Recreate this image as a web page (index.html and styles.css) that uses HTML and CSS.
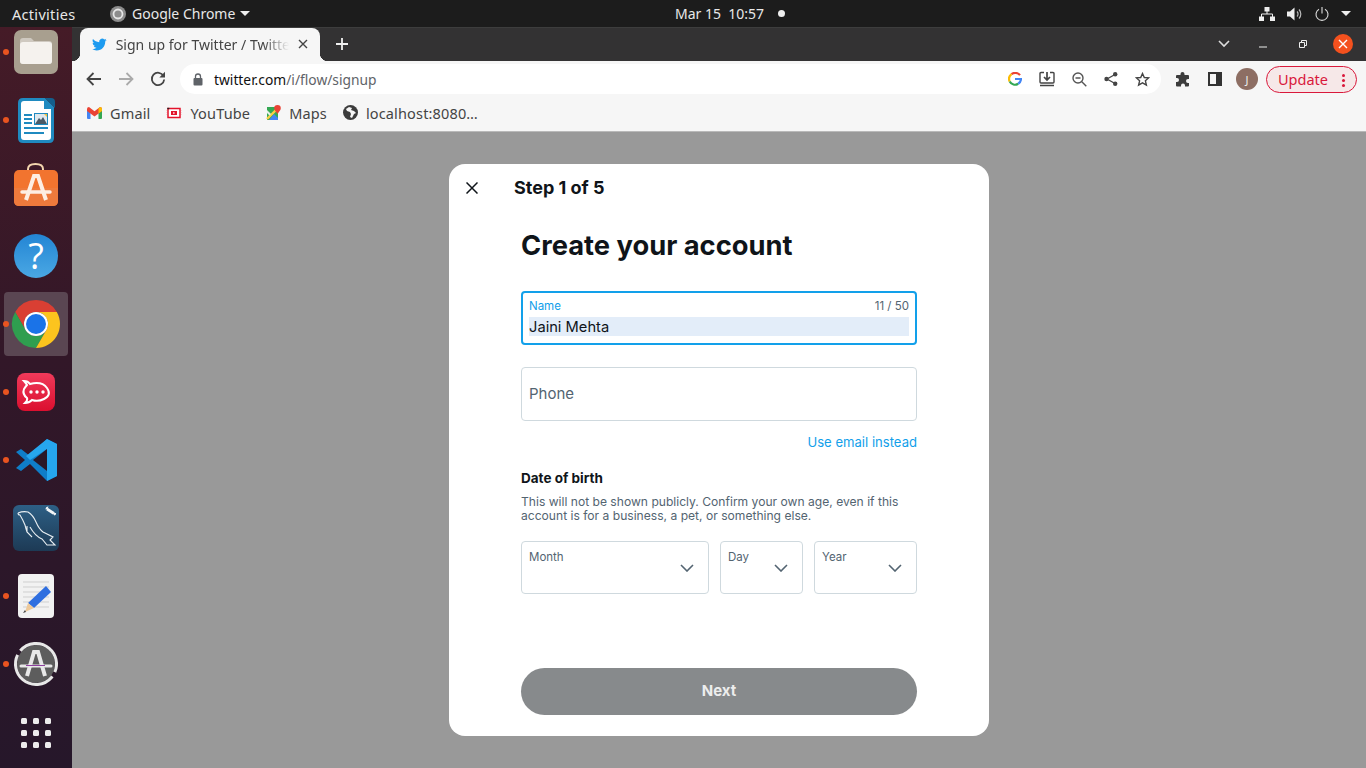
FILE: index.html
```html
<!DOCTYPE html>
<html lang="en">
<head>
  <meta charset="UTF-8">
  <title>Sign up for Twitter / Twitter</title>
  <link rel="stylesheet" href="styles.css">
</head>
<body>
  <header class="topbar">
    <span class="activities">Activities</span>
    <span class="app-menu">
      <svg class="app-icon" width="18" height="18" viewBox="0 0 18 18"><circle cx="9" cy="9" r="8" fill="#8c8c8c"/><circle cx="9" cy="9" r="4.5" fill="none" stroke="#e6e6e6" stroke-width="1.8"/></svg>
      Google Chrome
      <i class="caret"></i>
    </span>
    <span class="clock">Mar 15&nbsp;&nbsp;10:57</span>
    <i class="clock-dot"></i>
    <span class="tray">
      <svg width="16" height="14" viewBox="0 0 16 14"><path d="M5.5 0h5v4.5h-5zM0 9.500h5V14H0zM11 9.500h5V14h-5z" fill="#eee"/><path d="M8 4v3M2.500 10V7h11v3" fill="none" stroke="#eee"/></svg>
      <svg width="16" height="14" viewBox="0 0 16 14"><path d="M0 4.500h3L7.500.5v13L3 9.500H0z" fill="#eee"/><path d="M10 4.500a3.500 3.500 0 0 1 0 5M12 2.500a6.500 6.500 0 0 1 0 9" fill="none" stroke="#bbb" stroke-width="1.200"/></svg>
      <svg width="14" height="14" viewBox="0 0 14 14"><path d="M4 2.200a6 6 0 1 0 6 0M7 0v6.500" fill="none" stroke="#ddd" stroke-width="1.100"/></svg>
      <i class="caret"></i>
    </span>
  </header>

  <div class="desktop">
    <nav class="dock">
      <div class="dock-item running">
        <svg width="52" height="52" viewBox="0 0 52 52"><rect x="4" y="4" width="44" height="44" rx="7" fill="#a89f8f"/><path d="M10 15q0-3 3-3h8l3 3h15q3 0 3 3v17q0 3-3 3H13q-3 0-3-3z" fill="#cfc9c0"/><rect x="10" y="16" width="32" height="22" rx="3" fill="#f5f2ee"/></svg>
      </div>
      <div class="dock-item running">
        <svg width="52" height="52" viewBox="0 0 52 52"><path d="M8 9q0-5 5-5h22l9 9v31q0 5-5 5H13q-5 0-5-5z" fill="#1f8ac0"/><path d="M11 10q0-3 3-3h20v8h7v28q0 3-3 3H14q-3 0-3-3z" fill="#fff"/><path d="M35 4h6q4 0 4 4v6z" fill="#145f8c"/><path d="M14 20h8v2h-8zM14 24h8v2h-8zM14 28h8v2h-8zM14 33h24v2H14zM14 38h20v2H14z" fill="#1f8ac0"/><rect x="24" y="19" width="14" height="12" fill="#1f8ac0"/><rect x="25" y="20" width="12" height="10" fill="#dfe8ee"/><path d="M25 30l4-6 2 2 2-3 4 7z" fill="#4a5a66"/><path d="M34 20h3v3z" fill="#f0c23c"/></svg>
      </div>
      <div class="dock-item">
        <svg width="52" height="52" viewBox="0 0 52 52"><path d="M18 9V7q0-5 7.500-5T33 7v2" fill="none" stroke="#f3d6ae" stroke-width="2"/><rect x="4" y="8" width="44" height="36" rx="5" fill="#f2742f"/><path d="M4 26h44v13q0 5-5 5H9q-5 0-5-5z" fill="#ee7a3c"/><path d="M16 38l8-24h4l8 24" fill="none" stroke="#fdeee3" stroke-width="4"/><path d="M12 30h28" stroke="#fdeee3" stroke-width="3.500" stroke-linecap="round"/></svg>
      </div>
      <div class="dock-item">
        <svg width="52" height="52" viewBox="0 0 52 52"><defs><linearGradient id="helpBg" x1="0" y1="0" x2="0" y2="1"><stop offset="0" stop-color="#2385d4"/><stop offset="1" stop-color="#4aa8e4"/></linearGradient></defs><circle cx="26" cy="26" r="22" fill="url(#helpBg)"/><text x="26" y="39" class="help-mark">?</text></svg>
      </div>
      <div class="dock-item active running">
        <svg width="52" height="52" viewBox="-2 -2 52 52"><path d="M44.78 12H24A12 12 0 0 0 13.6 30L3.2 12A24 24 0 0 1 44.78 12z" fill="#d93f33"/><path d="M3.2 12L13.6 30A12 12 0 0 0 34.4 30L24 48A24 24 0 0 1 3.2 12z" fill="#2f9e4f"/><path d="M24 48L34.4 30A12 12 0 0 0 24 12H44.78A24 24 0 0 1 24 48z" fill="#fcc41e"/><circle cx="24" cy="24" r="12" fill="#fff"/><circle cx="24" cy="24" r="10" fill="#1a73e8"/></svg>
      </div>
      <div class="dock-item running">
        <svg width="52" height="52" viewBox="0 0 52 52"><defs><linearGradient id="rocketBg" x1="0" y1="0" x2="0" y2="1"><stop offset="0" stop-color="#f03a5a"/><stop offset="1" stop-color="#db0f2f"/></linearGradient></defs><rect x="7" y="7" width="38" height="38" rx="8" fill="url(#rocketBg)"/><path d="M14 15q4 0 6 3 12-3 17 4t-3 11q-6 3-12 1-3 3-7 3 3-3 2-5-5-4-3-9 2-3 3-4-1-2-3-4z" fill="none" stroke="#fff" stroke-width="2"/><circle cx="21" cy="26" r="1.700" fill="#fff"/><circle cx="27" cy="26" r="1.700" fill="#fff"/><circle cx="33" cy="26" r="1.700" fill="#fff"/></svg>
      </div>
      <div class="dock-item running">
        <svg width="52" height="52" viewBox="0 0 52 52"><path d="M37 5L47 10v32l-10 5-17-17-9 7-5-3 9-8-9-8 5-3 9 7z" fill="#0f7dc8"/><path d="M37 5l10 5v32l-10 5V15L20 26l-4-4z" fill="#26a6ee"/><path d="M37 15v22L23 26z" fill="#2a1727"/></svg>
      </div>
      <div class="dock-item">
        <svg width="52" height="52" viewBox="0 0 52 52"><defs><linearGradient id="sqlBg" x1="0" y1="0" x2="0" y2="1"><stop offset="0" stop-color="#2d5f85"/><stop offset="1" stop-color="#1d3a55"/></linearGradient></defs><rect x="3" y="3" width="46" height="46" rx="6" fill="url(#sqlBg)"/><path d="M8 11q5-2 10-1 5 3 8 10 3 7 7 10l10 5-3 3 5 5-8 0-5-6q-7-3-12-12M8 11q0 2 2 2 3 5 5 10 1 4 2 7l5 5M17 30v-6" fill="none" stroke="#e8eef2" stroke-width="1.100"/><path d="M37 7l7 4.500" fill="none" stroke="#f2f5f7" stroke-width="2.800"/><path d="M35.500 7.500q0-3 3-3l-1 2.500zM44 13.500q2.500 0 2-2.500l-2.500 0z" fill="#f2f5f7"/></svg>
      </div>
      <div class="dock-item running">
        <svg width="52" height="52" viewBox="0 0 52 52"><rect x="8" y="4" width="36" height="44" rx="4" fill="#f2f2f2"/><path d="M13 12h26M13 17h26M13 22h26M13 27h26M13 32h26M13 37h26" stroke="#cfcfcf"/><path d="M36 16l5 6-17 16-6-5z" fill="#2f6fe0"/><path d="M18 33l6 5-9 4z" fill="#eec99a"/><path d="M15 40l-2 3 3-1z" fill="#444"/></svg>
      </div>
      <div class="dock-item running">
        <svg width="52" height="52" viewBox="0 0 52 52"><circle cx="26" cy="26" r="19" fill="#5d5d5d"/><circle cx="26" cy="26" r="20.500" fill="none" stroke="#e8e8e8" stroke-width="3" stroke-dasharray="58 5 60 6" transform="rotate(-140 26 26)"/><path d="M17 38l7-24h4l7 24" fill="none" stroke="#e8e8e8" stroke-width="4"/><path d="M11 28h30" stroke="#e8e8e8" stroke-width="3" stroke-linecap="round"/><path d="M16 27.500h19" stroke="#8e3fa0"/></svg>
      </div>
      <div class="dock-item">
        <svg width="52" height="52" viewBox="0 -1 52 52"><g fill="#ececec"><rect x="11" y="11" width="6" height="6" rx="1.500"/><rect x="23" y="11" width="6" height="6" rx="1.500"/><rect x="35" y="11" width="6" height="6" rx="1.500"/><rect x="11" y="23" width="6" height="6" rx="1.500"/><rect x="23" y="23" width="6" height="6" rx="1.500"/><rect x="35" y="23" width="6" height="6" rx="1.500"/><rect x="11" y="35" width="6" height="6" rx="1.500"/><rect x="23" y="35" width="6" height="6" rx="1.500"/><rect x="35" y="35" width="6" height="6" rx="1.500"/></g></svg>
      </div>
    </nav>

    <div class="browser">
      <div class="tabstrip">
        <div class="tab">
          <svg width="15" height="15" viewBox="0 0 24 24"><path fill="#1d9bf0" d="M23.953 4.570a10 10 0 01-2.825.775 4.958 4.958 0 002.163-2.723c-.951.555-2.005.959-3.127 1.184a4.920 4.920 0 00-8.384 4.482C7.690 8.095 4.067 6.130 1.640 3.162a4.822 4.822 0 00-.666 2.475c0 1.710.870 3.213 2.188 4.096a4.904 4.904 0 01-2.228-.616v.060a4.923 4.923 0 003.946 4.827 4.996 4.996 0 01-2.212.085 4.936 4.936 0 004.604 3.417 9.867 9.867 0 01-6.102 2.105c-.390 0-.779-.023-1.170-.067a13.995 13.995 0 007.557 2.209c9.053 0 13.998-7.496 13.998-13.985 0-.210 0-.420-.015-.630A9.935 9.935 0 0024 4.590z"/></svg>
          <span class="tab-title">Sign up for Twitter / Twitter</span>
          <svg class="tab-close" width="10" height="10" viewBox="0 0 10 10"><path d="M1 1l8 8M9 1l-8 8" stroke="#444" stroke-width="1.400"/></svg>
        </div>
        <svg class="new-tab" width="12" height="12" viewBox="0 0 12 12"><path d="M6 0v12M0 6h12" stroke="#f0f0f0" stroke-width="1.800"/></svg>
        <div class="window-controls">
          <svg width="12" height="8" viewBox="0 0 12 8"><path d="M1 1l5 5 5-5" fill="none" stroke="#ddd" stroke-width="1.600"/></svg>
          <svg class="win-min" width="8" height="8" viewBox="0 0 8 8"><path d="M0 7h8" stroke="#eee"/></svg>
          <svg class="win-max" width="8" height="8" viewBox="0 0 8 8"><path d="M.5 2.500h5v5h-5zM2.500 2V.5h5v5H6" fill="none" stroke="#eee"/></svg>
          <span class="win-close"><svg width="10" height="10" viewBox="0 0 10 10"><path d="M1 1l8 8M9 1l-8 8" stroke="#fff" stroke-width="1.400"/></svg></span>
        </div>
      </div>

      <div class="toolbar">
        <svg class="nav-btn" width="16" height="14" viewBox="0 0 16 14"><path d="M15 7H2M7.500 1L1.500 7l6 6" fill="none" stroke="#444" stroke-width="1.800"/></svg>
        <svg class="nav-btn" width="16" height="14" viewBox="0 0 16 14"><path d="M1 7h13M8.500 1l6 6-6 6" fill="none" stroke="#aaa" stroke-width="1.800"/></svg>
        <svg class="nav-btn" width="16" height="16" viewBox="0 0 16 16"><path d="M13.500 5a6.200 6.200 0 1 0 .7 3.500" fill="none" stroke="#444" stroke-width="1.800"/><path d="M15 0.800v5.700H9.300z" fill="#444"/></svg>
        <div class="omnibox">
          <svg width="10" height="13" viewBox="0 0 10 13"><path d="M2.500 6V3.500a2.500 2.500 0 0 1 5 0V6" fill="none" stroke="#5f6368" stroke-width="1.300"/><rect x="0.500" y="5" width="9" height="7.500" rx="1" fill="#5f6368"/></svg>
          <span class="url"><b>twitter.com</b>/i/flow/signup</span>
          <span class="omni-actions">
            <svg width="14" height="14" viewBox="0 0 14 14"><path d="M12 3.200A6 6 0 0 0 3.500 2.200" fill="none" stroke="#ea4335" stroke-width="2.200"/><path d="M3.500 2.200A6 6 0 0 0 1.700 9.500" fill="none" stroke="#fbbc05" stroke-width="2.200"/><path d="M1.700 9.500a6 6 0 0 0 8.500 2.300" fill="none" stroke="#34a853" stroke-width="2.200"/><path d="M10.200 11.800A6 6 0 0 0 13 7H7" fill="none" stroke="#4285f4" stroke-width="2.200"/></svg>
            <svg width="16" height="16" viewBox="0 0 16 16"><path d="M5 1.500H2q-1 0-1 1V11q0 1 1 1h12q1 0 1-1V2.500q0-1-1-1h-3M1 14.500h14" fill="none" stroke="#444" stroke-width="1.400"/><path d="M8 1v7M5 6l3 3 3-3" fill="none" stroke="#444" stroke-width="1.700"/></svg>
            <svg width="15" height="15" viewBox="0 0 15 15"><circle cx="6" cy="6" r="5" fill="none" stroke="#555" stroke-width="1.400"/><path d="M3.500 6h5M9.800 9.800l4.500 4.500" fill="none" stroke="#555" stroke-width="1.400"/></svg>
            <svg width="14" height="14" viewBox="0 0 14 14"><path d="M11 2.500L3 7l8 4.500" fill="none" stroke="#444" stroke-width="1.300"/><circle cx="11.200" cy="2.300" r="2.200" fill="#444"/><circle cx="2.500" cy="7" r="2.200" fill="#444"/><circle cx="11.200" cy="11.700" r="2.200" fill="#444"/></svg>
            <svg width="15" height="15" viewBox="0 0 15 15"><path d="M7.500 1.500l1.800 4 4.300.4-3.200 2.900 1 4.300-3.900-2.300-3.900 2.300 1-4.300L1.400 5.900l4.300-.4z" fill="none" stroke="#444" stroke-width="1.400"/></svg>
          </span>
        </div>
        <svg class="tool-btn" width="15" height="15" viewBox="0 0 15 15"><path d="M5.500 2a2 2 0 0 1 4 0v1H13q1 0 1 1v3h-1a2 2 0 0 0 0 4h1v2.500q0 1-1 1H10v-1a2 2 0 0 0-4 0v1H2q-1 0-1-1V10h1a2 2 0 0 0 0-4H1V4q0-1 1-1h3.500z" fill="#3c3c3c"/></svg>
        <svg class="tool-btn" width="14" height="14" viewBox="0 0 14 14"><rect x="1" y="1" width="12" height="12" fill="none" stroke="#333" stroke-width="2"/><rect x="8" y="1" width="5" height="12" fill="#333"/></svg>
        <span class="avatar">J</span>
        <span class="update">Update<i class="update-dots"></i></span>
      </div>

      <div class="bookmarks">
        <span class="bookmark">
          <svg width="15" height="12" viewBox="0 0 15 12"><path d="M0 2h3.500v10H1q-1 0-1-1z" fill="#4285f4"/><path d="M11.500 2H15v9q0 1-1 1h-2.500z" fill="#34a853"/><path d="M0 2q0-2 2-2l5.500 4.200L13 0q2 0 2 2v2L7.500 9.500 0 4z" fill="#ea4335"/><path d="M13 0q2 0 2 2v2l-3.500 2.500V1.500z" fill="#fbbc05"/></svg>
          Gmail
        </span>
        <span class="bookmark">
          <svg width="16" height="12" viewBox="0 0 16 12"><path d="M0 3v6M16 3v6" stroke="#f3b8b8" stroke-dasharray="1 1"/><rect x="2" y="1.500" width="12" height="9" fill="#fff" stroke="#e3132b" stroke-width="1.500"/><rect x="5" y="4" width="6" height="4" fill="#e3132b"/><path d="M7.300 4.800l1.800 1.200-1.800 1.200z" fill="#fff"/><path d="M1.300 .8h2v1.400h-2z" fill="#222"/></svg>
          YouTube
        </span>
        <span class="bookmark">
          <svg width="15" height="15" viewBox="0 0 15 15"><path d="M1 2h11v13H1z" fill="#34a853"/><path d="M3 15l5-6 4 4v2z" fill="#4285f4"/><path d="M1 14L11 4" stroke="#fbd045" stroke-width="2.400"/><path d="M1 5l4 4-1.500 1.500L1 8z" fill="#e8f1e8"/><path d="M11.500 0a3.300 3.300 0 0 1 3.300 3.300c0 2-2 3.500-3.300 5.700-1.300-2.200-3.300-3.700-3.300-5.700A3.300 3.300 0 0 1 11.500 0z" fill="#ea4335"/></svg>
          Maps
        </span>
        <span class="bookmark">
          <svg width="15" height="15" viewBox="0 0 15 15"><circle cx="7.500" cy="7.500" r="7.500" fill="#3c3c3c"/><path d="M6 2L3 4l1 2 3 1 1 2-1 3 2 1 2-4 2-1-2-2-3-1 1-2z" fill="#f6f6f6"/></svg>
          localhost:8080…
        </span>
      </div>

      <main class="page">
        <section class="modal">
          <div class="modal-head">
            <svg width="12" height="12" viewBox="0 0 12 12"><path d="M.5.500l11 11M11.500.500l-11 11" stroke="#0f1419" stroke-width="1.500"/></svg>
            <span class="step">Step 1 of 5</span>
          </div>
          <div class="modal-body">
            <h1 class="title">Create your account</h1>

            <div class="field field-focus">
              <div class="field-top"><span>Name</span><span class="count">11 / 50</span></div>
              <div class="field-value"><span>Jaini Mehta</span></div>
            </div>

            <div class="field field-empty">Phone</div>
            <a class="switch-link">Use email instead</a>

            <h2 class="dob-title">Date of birth</h2>
            <p class="dob-note">This will not be shown publicly. Confirm your own age, even if this account is for a business, a pet, or something else.</p>

            <div class="dob-row">
              <div class="select select-month"><span>Month</span><svg width="14" height="8" viewBox="0 0 14 8"><path d="M1 1l6 6 6-6" fill="none" stroke="#536471" stroke-width="1.600"/></svg></div>
              <div class="select select-day"><span>Day</span><svg width="14" height="8" viewBox="0 0 14 8"><path d="M1 1l6 6 6-6" fill="none" stroke="#536471" stroke-width="1.600"/></svg></div>
              <div class="select select-year"><span>Year</span><svg width="14" height="8" viewBox="0 0 14 8"><path d="M1 1l6 6 6-6" fill="none" stroke="#536471" stroke-width="1.600"/></svg></div>
            </div>

            <button class="next">Next</button>
          </div>
        </section>
      </main>
    </div>
  </div>
</body>
</html>
```

FILE: styles.css
```css
* {
  box-sizing: border-box;
}
html, body {
  margin: 0;
  height: 768px;
  overflow: hidden;
}
body {
  font-family: "Noto Sans", sans-serif;
  display: flex;
  flex-direction: column;
}

/* ubuntu top bar */
.topbar {
  height: 27px;
  background: #1c1c1c;
  color: #e8e8e8;
  font-size: 14px;
  display: flex;
  align-items: center;
  padding-left: 12px;
  position: relative;
  z-index: 1;
}
.activities {
  width: 97px;
  font-size: 14.5px;
  letter-spacing: .3px;
}
.app-menu {
  display: flex;
  align-items: center;
  gap: 5px;
  width: 566px;
}
.app-icon {
  flex: none;
}
.caret {
  width: 0;
  height: 0;
  border-left: 5px solid transparent;
  border-right: 5px solid transparent;
  border-top: 5px solid #eee;
}
.clock {
  width: 103px;
  white-space: nowrap;
}
.clock-dot {
  width: 7px;
  height: 7px;
  border-radius: 50%;
  background: #eee;
}
.tray {
  margin-left: auto;
  display: flex;
  align-items: center;
  gap: 12px;
  padding-right: 15px;
}

/* dock */
.desktop {
  flex: 1;
  display: flex;
  min-height: 0;
}
.dock {
  width: 72px;
  flex: none;
  background: linear-gradient(#451b27, #321728 45%, #26172a);
  display: flex;
  flex-direction: column;
  align-items: center;
  gap: 16px;
  margin-top: -1px;
}
.dock-item {
  position: relative;
  width: 52px;
  height: 52px;
  flex: none;
}
.dock-item svg {
  display: block;
  position: relative;
}
.dock-item.active::before {
  content: "";
  position: absolute;
  left: -6px;
  top: -6px;
  width: 64px;
  height: 64px;
  border-radius: 4px;
  background: #5a4652;
}
.dock-item.running::after {
  content: "";
  position: absolute;
  left: -7px;
  top: 23px;
  width: 6px;
  height: 6px;
  border-radius: 50%;
  background: #e95420;
}
.help-mark {
  font-family: "Open Sans", sans-serif;
  font-size: 36px;
  fill: #fff;
  text-anchor: middle;
}

/* chrome */
.browser {
  flex: 1;
  display: flex;
  flex-direction: column;
  min-width: 0;
}
.tabstrip {
  height: 34px;
  background: #333233;
  display: flex;
  align-items: flex-end;
  padding-left: 8px;
  border-top: 1px solid #3d3d3d;
}
.tab {
  width: 240px;
  height: 33px;
  background: #f6f6f6;
  border-radius: 8px 8px 0 0;
  display: flex;
  align-items: center;
  padding: 0 12px 1px;
  font-size: 14px;
  color: #444;
  gap: 9px;
  position: relative;
}
.tab::before,
.tab::after {
  content: "";
  position: absolute;
  bottom: 0;
  width: 8px;
  height: 8px;
}
.tab::before {
  left: -8px;
  background: radial-gradient(circle at 0 0, transparent 8px, #f6f6f6 8.5px);
}
.tab::after {
  right: -8px;
  background: radial-gradient(circle at 100% 0, transparent 8px, #f6f6f6 8.5px);
}
.tab-title {
  width: 177px;
  white-space: nowrap;
  overflow: hidden;
  -webkit-mask-image: linear-gradient(90deg, #000 85%, transparent);
  mask-image: linear-gradient(90deg, #000 85%, transparent);
}
.tab-close {
  flex: none;
}
.new-tab {
  margin: 0 0 11px 16px;
}
.window-controls {
  margin-left: auto;
  height: 33px;
  display: flex;
  align-items: center;
  padding: 0 13px 1px 0;
}
.win-min {
  margin-left: 29px;
}
.win-max {
  margin-left: 32px;
}
.win-close {
  width: 20px;
  height: 20px;
  margin-left: 26px;
  border-radius: 50%;
  background: #f4511e;
  display: flex;
  align-items: center;
  justify-content: center;
}
.toolbar {
  height: 36px;
  background: #f6f6f6;
  display: flex;
  align-items: center;
  padding-left: 14px;
}
.nav-btn {
  margin-right: 16px;
}
.omnibox {
  width: 981px;
  height: 30px;
  margin-left: -2px;
  background: #fff;
  border-radius: 15px;
  display: flex;
  align-items: center;
  padding: 0 11px 0 13px;
  font-size: 13.8px;
  color: #5f6368;
}
.url {
  margin-left: 11px;
}
.url b {
  font-weight: 400;
  color: #111;
}
.omni-actions {
  margin-left: auto;
  display: flex;
  align-items: center;
  gap: 17px;
}
.tool-btn {
  margin-left: 14px;
}
.tool-btn + .tool-btn {
  margin-left: 18px;
}
.avatar {
  width: 22px;
  height: 22px;
  margin-left: 14px;
  border-radius: 50%;
  background: #8d6e63;
  color: #eee;
  font-size: 11px;
  display: flex;
  align-items: center;
  justify-content: center;
}
.update {
  width: 91px;
  height: 27px;
  margin-left: 8px;
  border: 1px solid #d9183b;
  border-radius: 14px;
  background: #f6e8e8;
  color: #d9183b;
  font-size: 14.5px;
  display: flex;
  align-items: center;
  padding-left: 11px;
  position: relative;
}
.update-dots {
  position: absolute;
  right: 11px;
  top: 7px;
  width: 3px;
  height: 3px;
  border-radius: 50%;
  background: #d9183b;
  box-shadow: 0 5px 0 #d9183b, 0 10px 0 #d9183b;
}
.bookmarks {
  height: 35px;
  background: #f6f6f6;
  border-bottom: 1px solid #b9b9b9;
  display: flex;
  align-items: center;
  padding: 0 0 3px 15px;
  font-size: 14.5px;
  letter-spacing: .15px;
  color: #444;
  gap: 16px;
}
.bookmark {
  display: flex;
  align-items: center;
  gap: 8px;
}

/* dimmed page and signup dialog */
.page {
  flex: 1;
  background: #999;
  display: flex;
  align-items: center;
  justify-content: center;
}
.modal {
  width: 540px;
  height: 572px;
  background: #fff;
  border-radius: 16px;
  font-family: Inter, sans-serif;
  color: #0f1419;
}
.modal-head {
  height: 47px;
  display: flex;
  align-items: center;
  padding-left: 17px;
}
.step {
  margin-left: 36px;
  font-size: 18px;
  font-weight: 700;
}
.modal-body {
  padding: 0 72px;
}
.title {
  margin: 16px 0 26px;
  font-size: 27.3px;
  line-height: 38px;
  font-weight: 700;
}
.field {
  height: 54px;
  border: 1px solid #cfd9de;
  border-radius: 4px;
}
.field-focus {
  border: 2px solid #12a0ea;
  padding: 6px 6px 0;
  margin-bottom: 22px;
}
.field-top {
  display: flex;
  justify-content: space-between;
  font-size: 11.5px;
  line-height: 14px;
  color: #12a0ea;
}
.count {
  color: #536471;
}
.field-value {
  margin-top: 4px;
  height: 19px;
  background: #e3edf9;
  font-size: 14.7px;
  line-height: 21px;
}
.field-empty {
  display: flex;
  align-items: center;
  padding: 0 0 2px 7px;
  font-size: 15px;
  color: #536471;
}
.switch-link {
  display: block;
  margin-top: 13px;
  text-align: right;
  font-size: 13.1px;
  line-height: 17px;
  color: #12a0ea;
}
.dob-title {
  margin: 19px 0 0;
  font-size: 13.5px;
  line-height: 17px;
  font-weight: 700;
}
.dob-note {
  margin: 8px 0 0;
  font-size: 12.1px;
  line-height: 14px;
  color: #536471;
}
.dob-row {
  display: flex;
  gap: 11px;
  margin-top: 18px;
}
.select {
  height: 53px;
  border: 1px solid #cfd9de;
  border-radius: 4px;
  padding: 8px 8px 0 7px;
  font-size: 11.5px;
  line-height: 14px;
  color: #536471;
  display: flex;
  justify-content: space-between;
}
.select svg {
  margin: 14px 6px 0 0;
}
.select-month {
  width: 188px;
}
.select-day {
  width: 83px;
}
.select-year {
  width: 103px;
}
.next {
  display: block;
  width: 396px;
  height: 47px;
  margin-top: 74px;
  padding-bottom: 3px;
  border: none;
  border-radius: 24px;
  background: #878a8c;
  color: #eceded;
  font-family: Inter, sans-serif;
  font-size: 15px;
  font-weight: 700;
}
```
